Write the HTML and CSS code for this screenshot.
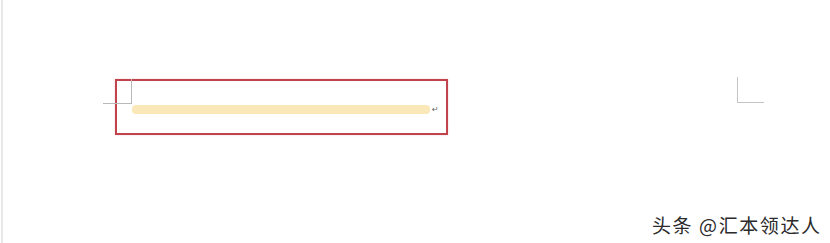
FILE: index.html
```html
<!DOCTYPE html>
<html>
<head>
<meta charset="utf-8">
<link rel="stylesheet" href="styles.css">
</head>
<body>
<div class="page">
  <div class="edge"></div>
  <div class="doc">
    <div class="row">
      <div class="box">
        <div class="crop-left"></div>
        <div class="line">
          <div class="hl"></div>
          <span class="ret">↵</span>
        </div>
      </div>
      <div class="crop-right"></div>
    </div>
  </div>
  <div class="mark">头条 @汇本领达人</div>
</div>
</body>
</html>
```
FILE: styles.css
```css
html, body {
  margin: 0;
  padding: 0;
  background: #ffffff;
}
.page {
  position: relative;
  width: 830px;
  height: 243px;
  display: flex;
  overflow: hidden;
  background: #ffffff;
}
.edge {
  width: 2px;
  margin-left: 1px;
  height: 243px;
  background: #e8e8e8;
}
.doc {
  flex: 1;
}
.row {
  display: flex;
  align-items: flex-start;
  padding-top: 79px;
}
.box {
  position: relative;
  margin-left: 112px;
  width: 329px;
  height: 52px;
  border: 2px solid #c1434c;
  box-shadow: 0 0 2px rgba(220, 120, 130, 0.35);
}
.crop-left {
  position: absolute;
  left: -14px;
  top: -2px;
  width: 28px;
  height: 24px;
  border-right: 1px solid #b9b9b9;
  border-bottom: 1px solid #b9b9b9;
}
.line {
  display: flex;
  align-items: flex-end;
  margin-top: 24px;
  margin-left: 15px;
}
.hl {
  width: 298px;
  height: 9px;
  border-radius: 4px;
  background: #fbe8b9;
}
.ret {
  font-family: "DejaVu Sans", sans-serif;
  font-size: 8px;
  line-height: 8px;
  color: #666666;
  margin-left: 2px;
}
.crop-right {
  margin-left: 289px;
  margin-top: -2px;
  width: 26px;
  height: 25px;
  border-left: 1px solid #c4c4c4;
  border-bottom: 1px solid #c4c4c4;
}
.mark {
  position: absolute;
  left: 652px;
  top: 213px;
  font-family: "Noto Sans CJK SC", "Noto Sans", sans-serif;
  font-size: 19px;
  line-height: 24px;
  color: #2a2a2a;
  letter-spacing: 1.6px;
  white-space: nowrap;
}
```
